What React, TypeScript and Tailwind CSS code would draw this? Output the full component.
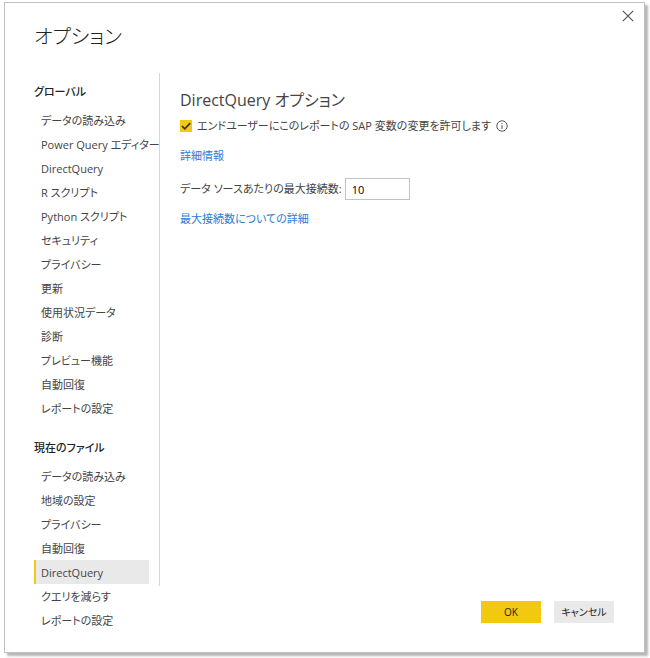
const globalItems = [
  'データの読み込み',
  'Power Query エディター',
  'DirectQuery',
  'R スクリプト',
  'Python スクリプト',
  'セキュリティ',
  'プライバシー',
  '更新',
  '使用状況データ',
  '診断',
  'プレビュー機能',
  '自動回復',
  'レポートの設定',
];

const fileItems = [
  'データの読み込み',
  '地域の設定',
  'プライバシー',
  '自動回復',
  'DirectQuery',
  'クエリを減らす',
  'レポートの設定',
];

function NavGroup({ title, items, selected }: { title: string; items: string[]; selected?: string }) {
  return (
    <section>
      <h2 className="mb-1 pt-px text-[11px] leading-6 font-medium text-[#222222]">{title}</h2>
      <ul>
        {items.map((item) => (
          <li key={item}>
            <button
              type="button"
              aria-current={item === selected ? 'page' : undefined}
              className={
                item === selected
                  ? 'block h-6 w-[115px] border-l-2 border-[#f2c811] bg-[#e9e9e9] pt-px pl-[5px] text-left leading-6 whitespace-nowrap'
                  : 'block h-6 w-[115px] border-l-2 border-transparent pt-px pl-[5px] text-left leading-6 whitespace-nowrap'
              }
            >
              {item}
            </button>
          </li>
        ))}
      </ul>
    </section>
  );
}

export default function App() {
  return (
    <div className="bg-white pt-0.5 pr-[5px] pb-[5px] pl-1 font-['Open_Sans','Noto_Sans_CJK_JP',sans-serif] text-[11px] text-[#444444] [font-feature-settings:'palt']">
      <div
        role="dialog"
        aria-labelledby="dialog-title"
        className="border border-[#c0c0c0] bg-white shadow-[3px_3px_2px_0px_#b8b8b8]"
      >
        <header className="flex items-start justify-between pl-[29px]">
          <h1 id="dialog-title" className="pt-[18px] pb-5 text-xl leading-8 font-light text-[#222222]">
            オプション
          </h1>
          <button type="button" aria-label="閉じる" className="mt-[7px] mr-[10px]">
            <svg width="12" height="12" viewBox="0 0 12 12" fill="none" stroke="#555555" strokeWidth="1.2">
              <path d="M0.8 0.8 11.2 11.2M11.2 0.8 0.8 11.2" />
            </svg>
          </button>
        </header>
        <div className="flex">
          <nav className="flex w-[154px] flex-none flex-col gap-[15px] pt-[6px] pb-5 pl-[29px]">
            <NavGroup title="グローバル" items={globalItems} />
            <NavGroup title="現在のファイル" items={fileItems} selected="DirectQuery" />
          </nav>
          <div className="flex min-w-0 flex-1 flex-col">
            <main className="flex-1 border-l border-[#d6d6d6] pt-[13px] pl-5">
              <h2 className="text-base leading-7 text-[#444444]">DirectQuery オプション</h2>
              <div className="mt-0.5 flex h-5 items-center">
                <label className="flex items-center gap-[5px]">
                  <span className="relative flex">
                    <input type="checkbox" defaultChecked className="peer size-3 appearance-none bg-[#f2c811]" />
                    <svg
                      className="pointer-events-none absolute inset-0 hidden peer-checked:block"
                      width="12"
                      height="12"
                      viewBox="0 0 12 12"
                      fill="none"
                      stroke="#333333"
                      strokeWidth="1.7"
                    >
                      <path d="M2 6 4.8 8.8 10.2 3.2" />
                    </svg>
                  </span>
                  エンドユーザーにこのレポートの SAP 変数の変更を許可します
                </label>
                <button type="button" aria-label="情報" className="ml-[5px]">
                  <svg width="12" height="12" viewBox="0 0 12 12" fill="none" stroke="#555555">
                    <circle cx="6" cy="6" r="5.2" />
                    <path d="M6 5V9M6 3V4.1" />
                  </svg>
                </button>
              </div>
              <a href="#details" className="mt-2.5 block w-fit leading-5 text-[#2b7cd3]">
                詳細情報
              </a>
              <div className="mt-3 flex items-center gap-[3px]">
                <label htmlFor="max-connections">データ ソースあたりの最大接続数:</label>
                <input
                  id="max-connections"
                  type="text"
                  defaultValue="10"
                  className="h-[22px] w-[65px] border border-[#c3c3c3] bg-white px-1.5 text-[11px] text-black"
                />
              </div>
              <a href="#max-connections-details" className="mt-[9px] block w-fit leading-5 text-[#2b7cd3]">
                最大接続数についての詳細
              </a>
            </main>
            <footer className="flex justify-end gap-[13px] pt-[15px] pr-[30px] pb-[29px] text-[10px] text-[#222222]">
              <button type="button" className="h-[22px] w-[60px] bg-[#f2c811]">
                OK
              </button>
              <button type="button" className="h-[22px] w-[60px] bg-[#e9e9e9]">
                キャンセル
              </button>
            </footer>
          </div>
        </div>
      </div>
    </div>
  );
}
